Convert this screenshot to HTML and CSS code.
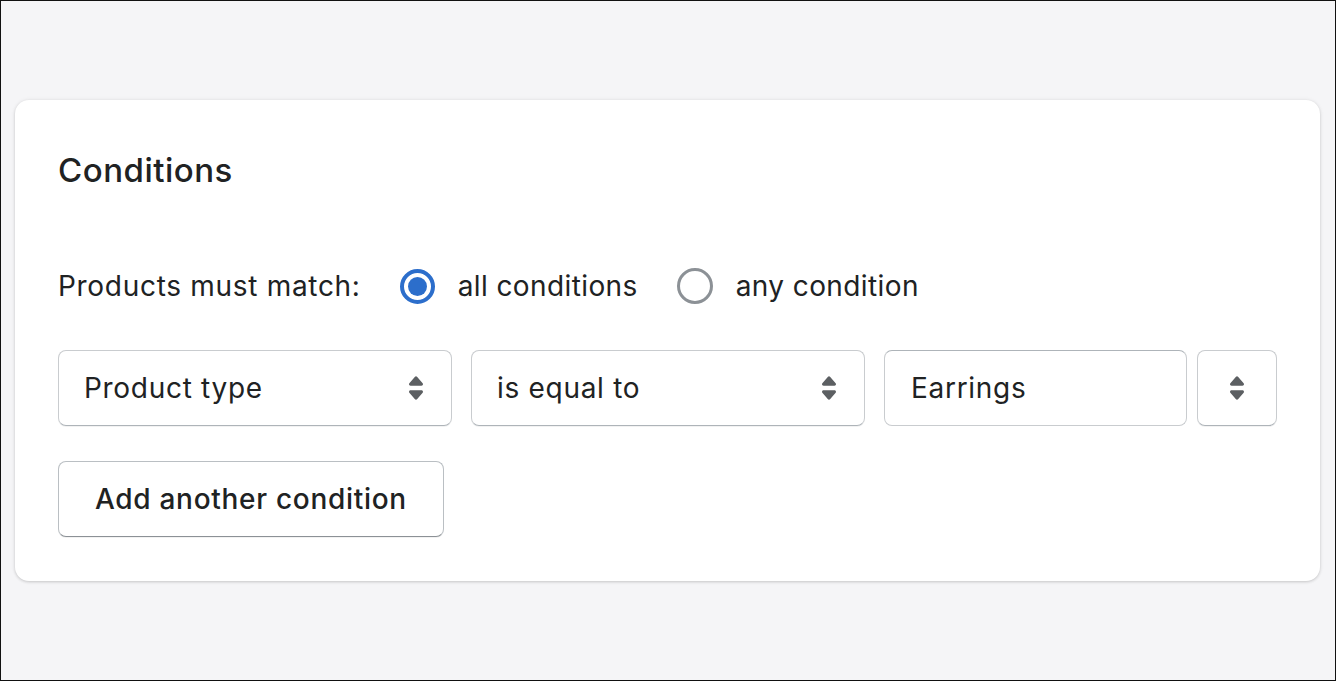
FILE: index.html
```html
<!DOCTYPE html>
<html lang="en">
<head>
	<meta charset="UTF-8">
	<title>Conditions</title>
	<link rel="stylesheet" href="styles.css">
</head>
<body>

	<div class="page">
		<div class="card">
			<h2 class="card-title">Conditions</h2>

			<div class="match-row">
				<span class="match-label">Products must match:</span>
				<label class="radio">
					<span class="radio-dot checked"></span>
					<span>all conditions</span>
				</label>
				<label class="radio">
					<span class="radio-dot"></span>
					<span>any condition</span>
				</label>
			</div>

			<div class="condition-row">
				<div class="select select-wide">
					<span>Product type</span>
					<svg class="arrows" viewBox="7 5 6 10"><path d="M7.676 9h4.648c.563 0 .879-.603.53-1.014l-2.323-2.746a.708.708 0 0 0-1.062 0l-2.324 2.746c-.347.411-.032 1.014.531 1.014Zm4.648 2h-4.648c-.563 0-.878.603-.53 1.014l2.323 2.746c.27.32.792.32 1.062 0l2.323-2.746c.349-.411.033-1.014-.53-1.014Z"/></svg>
				</div>
				<div class="select select-wide">
					<span>is equal to</span>
					<svg class="arrows" viewBox="7 5 6 10"><path d="M7.676 9h4.648c.563 0 .879-.603.53-1.014l-2.323-2.746a.708.708 0 0 0-1.062 0l-2.324 2.746c-.347.411-.032 1.014.531 1.014Zm4.648 2h-4.648c-.563 0-.878.603-.53 1.014l2.323 2.746c.27.32.792.32 1.062 0l2.323-2.746c.349-.411.033-1.014-.53-1.014Z"/></svg>
				</div>
				<div class="field-group">
					<div class="text-field">Earrings</div>
					<div class="select select-small">
						<svg class="arrows" viewBox="7 5 6 10"><path d="M7.676 9h4.648c.563 0 .879-.603.53-1.014l-2.323-2.746a.708.708 0 0 0-1.062 0l-2.324 2.746c-.347.411-.032 1.014.531 1.014Zm4.648 2h-4.648c-.563 0-.878.603-.53 1.014l2.323 2.746c.27.32.792.32 1.062 0l2.323-2.746c.349-.411.033-1.014-.53-1.014Z"/></svg>
					</div>
				</div>
			</div>

			<button class="btn">Add another condition</button>
		</div>
	</div>

</body>
</html>
```

FILE: styles.css
```css
* {
	padding: 0;
	margin: 0;
	box-sizing: border-box;
}

body {
	font-family: Inter, "Noto Sans", sans-serif;
	color: #202223;
	background-color: #f6f6f7;
}

.page {
	width: 1336px;
	height: 681px;
	border: 1px solid #111;
	padding: 99px 0 0 14px;
	background-color: #f5f5f7;
}

.card {
	width: 1305px;
	background-color: #fff;
	border-radius: 14px;
	box-shadow: 0 0 5px rgba(23, 24, 24, .06), 0 1px 3px rgba(0, 0, 0, .16);
	padding: 50px 43px 44px;
}

.card-title {
	font-size: 33px;
	font-weight: 550;
	line-height: 40px;
	letter-spacing: .5px;
}

.match-row {
	display: flex;
	align-items: center;
	height: 40px;
	margin-top: 76px;
	font-size: 28px;
	letter-spacing: .7px;
}

.match-label {
	margin-right: 39px;
}

.radio {
	display: flex;
	align-items: center;
	margin-right: 39px;
	letter-spacing: .4px;
}

.radio-dot {
	width: 36px;
	height: 36px;
	border-radius: 50%;
	border: 3px solid #8c9196;
	margin-right: 23px;
	display: flex;
	align-items: center;
	justify-content: center;
}

.radio-dot.checked {
	width: 35px;
	height: 35px;
	border: 4px solid #2c6ecb;
}

.radio-dot.checked:after {
	content: "";
	width: 19px;
	height: 19px;
	border-radius: 50%;
	background-color: #2c6ecb;
}

.condition-row {
	display: flex;
	gap: 19px;
	margin-top: 44px;
	font-size: 28px;
	letter-spacing: .7px;
}

.select {
	display: flex;
	align-items: center;
	justify-content: space-between;
	height: 76px;
	border: 1.5px solid #c9cccf;
	border-bottom-color: #aeb4b9;
	border-radius: 8px;
	padding: 0 28px 0 25px;
	box-shadow: 0 1px 0 rgba(0, 0, 0, .05);
}

.select-wide {
	width: 394px;
}

.select-small {
	width: 80px;
	justify-content: center;
	padding: 0;
}

.arrows {
	width: 14px;
	height: 24px;
	fill: #5c5f62;
}

.field-group {
	display: flex;
	gap: 10px;
}

.text-field {
	width: 303px;
	height: 76px;
	border: 1.5px solid #c9cccf;
	border-top-color: #aeb4b9;
	border-radius: 8px;
	padding-left: 26px;
	display: flex;
	align-items: center;
}

.btn {
	display: block;
	margin-top: 35px;
	height: 76px;
	padding: 0 36px;
	font-family: inherit;
	font-size: 28px;
	font-weight: 500;
	letter-spacing: .7px;
	color: #202223;
	background-color: #fff;
	border: 1.5px solid #babfc3;
	border-bottom-color: #8c9196;
	border-radius: 8px;
	box-shadow: 0 1px 0 rgba(0, 0, 0, .05);
}
```
